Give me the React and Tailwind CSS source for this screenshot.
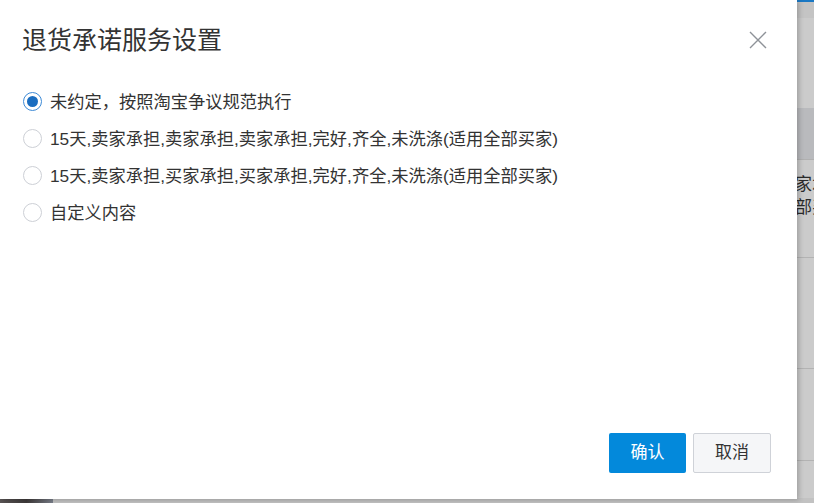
import React, { useState } from "react";

const options = [
  "未约定，按照淘宝争议规范执行",
  "15天,卖家承担,卖家承担,卖家承担,完好,齐全,未洗涤(适用全部买家)",
  "15天,卖家承担,买家承担,买家承担,完好,齐全,未洗涤(适用全部买家)",
  "自定义内容",
];

const Radio = ({ checked }) => (
  <span
    className={
      checked
        ? "flex h-[19px] w-[19px] shrink-0 items-center justify-center rounded-full border border-[#3d8ad6] bg-white"
        : "flex h-[19px] w-[19px] shrink-0 items-center justify-center rounded-full border border-[#cdd0d6] bg-white"
    }
  >
    {checked && <span className="h-[11px] w-[11px] rounded-full bg-[#1a6dc0]" />}
  </span>
);

export default function App() {
  const [selected, setSelected] = useState(0);

  return (
    <div className="relative h-[503px] w-[814px] overflow-hidden bg-[#cbcbcb] font-['Liberation_Sans','Noto_Sans_CJK_SC',sans-serif] text-[#333]">
      {/* page behind the overlay */}
      <div className="flex h-full flex-col">
        <div className="h-[2px] bg-[#1a78c4]" />
        <div className="h-[16px] bg-[#c4c4c4]" />
        <div className="h-[90px]" />
        <div className="h-[52px] border-b border-[#b0b0b0] bg-[#b9babd]" />
        <div className="h-[98px] overflow-hidden border-b border-[#b3b3b3] pl-[795px] pt-[13px] text-[17px] leading-[23px] text-[#2b2b2b]">
          <div className="whitespace-nowrap">家承</div>
          <div className="whitespace-nowrap">部买</div>
        </div>
        <div className="h-[111px] border-b border-[#b3b3b3]" />
        <div className="h-[92px] border-b border-[#b3b3b3]" />
        <div className="flex-1 pt-[37px]">
          <div className="flex h-[5px]">
            <div className="w-[53px] bg-gradient-to-r from-[#5a5555] via-[#3e3a3a] to-[#7a7f8a]" />
            <div className="flex-1 bg-[#c2c2c2]" />
          </div>
        </div>
      </div>

      {/* dialog */}
      <div className="absolute left-0 top-0 flex h-[499px] w-[797px] flex-col bg-white shadow-[2px_1px_5px_rgba(0,0,0,0.22)]">
        <div className="flex items-center justify-between pl-[22px] pr-[30px] pt-[24px]">
          <h2 className="text-[25px] leading-[32px] text-[#333]">退货承诺服务设置</h2>
          <button className="h-[18px] w-[18px]">
            <svg viewBox="0 0 18 18" width="18" height="18">
              <path d="M1 1L17 17M17 1L1 17" stroke="#8e9298" strokeWidth="1.4" fill="none" />
            </svg>
          </button>
        </div>

        <div className="mt-[27px] flex flex-col pl-[23px]">
          {options.map((text, i) => (
            <label
              key={i}
              onClick={() => setSelected(i)}
              className="flex h-[37px] cursor-pointer items-center gap-[8px] text-[17.25px] leading-[24px] text-[#333]"
            >
              <Radio checked={selected === i} />
              <span className="whitespace-nowrap">{text}</span>
            </label>
          ))}
        </div>

        <div className="mt-auto flex justify-end gap-[7px] pb-[26px] pr-[26px]">
          <button className="h-[40px] w-[77px] rounded-[2px] bg-[#0389db] text-[17px] text-white">
            确认
          </button>
          <button className="h-[40px] w-[78px] rounded-[2px] border border-[#cfd2d8] bg-[#f5f6f8] text-[17px] text-[#333]">
            取消
          </button>
        </div>
      </div>
    </div>
  );
}
